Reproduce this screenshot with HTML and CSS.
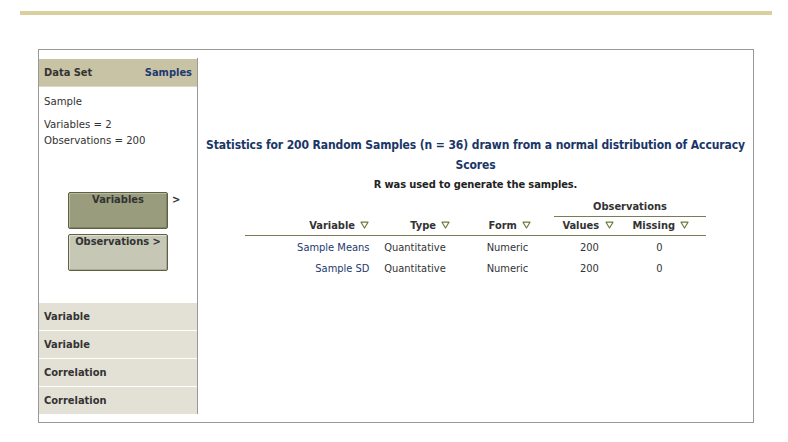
FILE: index.html
```html
<!DOCTYPE html>
<html>
<head>
<meta charset="utf-8">
<link rel="stylesheet" href="styles.css">
</head>
<body>
<div class="topbar"></div>
<div class="panel">
  <aside class="sidebar">
    <div class="ds-head"><span>Data Set</span><span class="link">Samples</span></div>
    <div class="ds-info">
      <p class="ds-name">Sample</p>
      <p class="ds-counts">Variables = 2<br>Observations = 200</p>
    </div>
    <div class="btns">
      <div class="btn-row"><div class="btn dark">Variables</div><span class="arrow">&gt;</span></div>
      <div class="btn-row"><div class="btn light">Observations &gt;</div></div>
    </div>
    <ul class="menu">
      <li>Variable</li>
      <li>Variable</li>
      <li>Correlation</li>
      <li>Correlation</li>
    </ul>
  </aside>
  <main class="content">
    <h1 class="title">Statistics for 200 Random Samples (n = 36) drawn from a normal distribution of Accuracy Scores</h1>
    <p class="subtitle">R was used to generate the samples.</p>
    <table class="stats">
      <colgroup>
        <col class="c1"><col class="c2"><col class="c3"><col class="c4"><col class="c5">
      </colgroup>
      <thead>
        <tr class="group">
          <th></th><th></th><th></th>
          <th colspan="2" class="obs">Observations</th>
        </tr>
        <tr class="heads">
          <th class="h1">Variable <svg class="tri" width="9" height="8" viewBox="0 0 9 8"><path d="M1 1.2h7L4.5 7z" fill="none" stroke="#6e7c3a" stroke-width="1.2" stroke-linejoin="round"/></svg></th>
          <th class="h2">Type <svg class="tri" width="9" height="8" viewBox="0 0 9 8"><path d="M1 1.2h7L4.5 7z" fill="none" stroke="#6e7c3a" stroke-width="1.2" stroke-linejoin="round"/></svg></th>
          <th class="h3">Form <svg class="tri" width="9" height="8" viewBox="0 0 9 8"><path d="M1 1.2h7L4.5 7z" fill="none" stroke="#6e7c3a" stroke-width="1.2" stroke-linejoin="round"/></svg></th>
          <th class="h4">Values <svg class="tri" width="9" height="8" viewBox="0 0 9 8"><path d="M1 1.2h7L4.5 7z" fill="none" stroke="#6e7c3a" stroke-width="1.2" stroke-linejoin="round"/></svg></th>
          <th class="h5">Missing <svg class="tri" width="9" height="8" viewBox="0 0 9 8"><path d="M1 1.2h7L4.5 7z" fill="none" stroke="#6e7c3a" stroke-width="1.2" stroke-linejoin="round"/></svg></th>
        </tr>
      </thead>
      <tbody>
        <tr>
          <td class="d1 link">Sample Means</td><td class="d2">Quantitative</td><td class="d3">Numeric</td><td class="d4">200</td><td class="d5">0</td>
        </tr>
        <tr>
          <td class="d1 link">Sample SD</td><td class="d2">Quantitative</td><td class="d3">Numeric</td><td class="d4">200</td><td class="d5">0</td>
        </tr>
      </tbody>
    </table>
  </main>
</div>
</body>
</html>
```
FILE: styles.css
```css
* { box-sizing: border-box; }
body {
  margin: 0;
  background: #fff;
  font-family: "DejaVu Sans Condensed", "DejaVu Sans", sans-serif;
  font-size: 11px;
  color: #333;
}
.topbar {
  height: 4px;
  margin: 11px 16px 0 20px;
  background: #d9cf9f;
}
.panel {
  margin: 34px 0 0 38px;
  width: 716px;
  height: 374px;
  border: 1px solid #999;
  display: flex;
  align-items: flex-start;
  padding-top: 8px;
}
.sidebar {
  width: 159px;
  height: 356px;
  border-right: 1px solid #999;
  display: flex;
  flex-direction: column;
  padding-top: 1px;
}
.ds-head {
  height: 28px;
  background: #c9c3a6;
  border-bottom: 1px solid #ddd8c4;
  display: flex;
  justify-content: space-between;
  align-items: center;
  padding: 0 5px;
  font-weight: bold;
  color: #333;
}
.link { color: #1c3a70; }
.ds-info { padding: 7px 5px 0; line-height: 16px; font-size: 11.3px; }
.ds-info p { margin: 0; }
.ds-info .ds-counts { margin-top: 7px; }
.btns {
  margin-top: 43px;
  padding-left: 29px;
  display: flex;
  flex-direction: column;
  gap: 5px;
}
.btn-row { display: flex; align-items: flex-start; }
.btn {
  width: 100px;
  height: 37px;
  border: 1px solid #5f6242;
  border-radius: 2px;
  text-align: center;
  font-weight: bold;
  line-height: 13px;
  color: #333;
}
.btn.dark {
  background: #9a9c7e;
  box-shadow: inset 1px 1px 0 #b9baa2, inset -1px -1px 0 #7f8164;
}
.btn.light {
  background: #c6c8b5;
  box-shadow: inset 1px 1px 0 #e0e1d4, inset -1px -1px 0 #a9ab96;
}
.arrow {
  margin-left: 4px;
  font-weight: bold;
  line-height: 15px;
}
.menu {
  list-style: none;
  margin: auto 0 0;
  padding: 0;
}
.menu li {
  height: 28px;
  line-height: 27px;
  border-top: 1px solid #fff;
  background: #e3e1d6;
  padding-left: 5px;
  font-weight: bold;
  color: #333;
}
.content {
  flex: 1;
  text-align: center;
  padding-top: 77px;
}
.title {
  margin: 0;
  font-size: 12px;
  letter-spacing: -0.1px;
  font-weight: bold;
  line-height: 20px;
  color: #1a3668;
  padding: 0;
}
.subtitle {
  margin: 0;
  font-weight: bold;
  line-height: 20px;
  color: #222;
  letter-spacing: -0.1px;
}
.stats {
  margin: 1px auto 0;
  width: 460px;
  table-layout: fixed;
  border-collapse: collapse;
}
.c1 { width: 130px; }
.c2 { width: 83px; }
.c3 { width: 96px; }
.c4 { width: 67px; }
.c5 { width: 84px; }
.stats th, .stats td {
  padding: 0;
  line-height: 16px;
  white-space: nowrap;
}
.stats th { font-weight: bold; color: #333; }
.stats .group th { padding: 3px 0 1px; }
.stats .group .obs { border-bottom: 1px solid #7b7b55; text-align: center; }
.stats .heads th { padding-top: 1px; padding-bottom: 1px; border-bottom: 1px solid #7b7b55; }
.stats tbody td { padding-top: 4px; padding-bottom: 1px; }
.stats .h1 { text-align: right; padding-right: 6px; }
.stats .h2 { text-align: right; padding-right: 8px; }
.stats .h3 { text-align: center; padding-left: 7px; }
.stats .h4 { text-align: center; }
.stats .h5 { text-align: center; padding-right: 5px; }
.stats .d1 { text-align: right; padding-right: 6px; }
.stats .d2 { text-align: center; padding-right: 4px; }
.stats .d3 { text-align: center; padding-left: 2px; }
.stats .d4 { text-align: center; padding-left: 3px; }
.stats .d5 { text-align: center; padding-right: 8px; }
.tri { vertical-align: 0; margin-left: 2px; }
```
